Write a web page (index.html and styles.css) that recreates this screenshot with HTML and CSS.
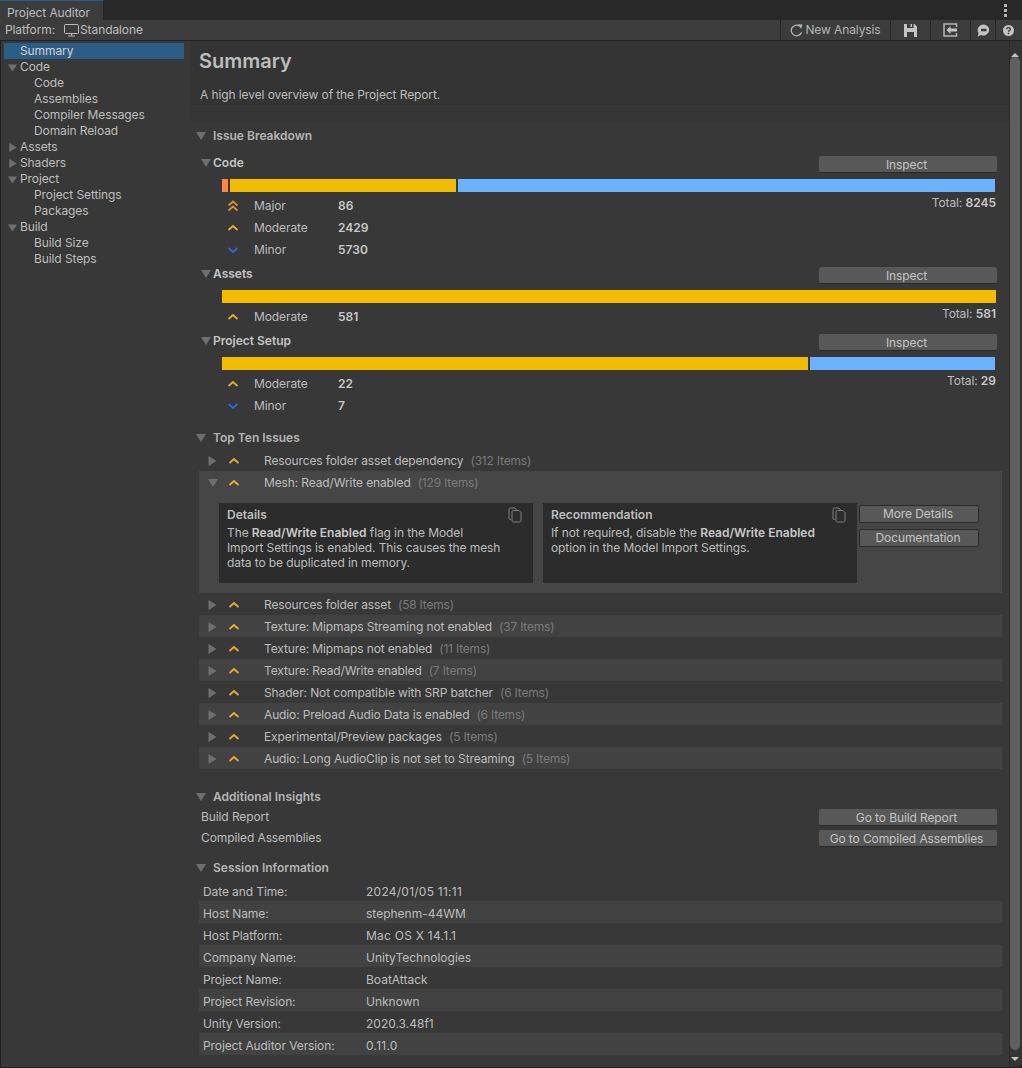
FILE: index.html
```html
<!DOCTYPE html>
<html lang="en">
<head>
  <meta charset="UTF-8">
  <meta name="viewport" content="width=device-width, initial-scale=1.0">
  <title>Project Auditor</title>
  <link rel="stylesheet" href="styles.css">
</head>
<body>
  <svg class="defs" width="0" height="0">
    <symbol id="tri-down" viewBox="0 0 10 8"><path d="M0 0H10L5 8Z"/></symbol>
    <symbol id="tri-right" viewBox="0 0 8 10"><path d="M0 0V10L8 5Z"/></symbol>
    <symbol id="sev-major" viewBox="0 0 12 12"><path d="M1.500 5.500 6 1.500l4.500 4M1.500 10.500 6 6.500l4.500 4" fill="none" stroke="#dc8f33" stroke-width="1.700"/></symbol>
    <symbol id="sev-moderate" viewBox="0 0 12 12"><path d="M1.500 8 6 4l4.500 4" fill="none" stroke="#e3b12f" stroke-width="1.700"/></symbol>
    <symbol id="sev-minor" viewBox="0 0 12 12"><path d="M1.500 4 6 8l4.500-4" fill="none" stroke="#3d5fe3" stroke-width="1.700"/></symbol>
    <symbol id="copy" viewBox="0 0 14 16"><path d="M3 12.500H2.500A1.500 1.500 0 0 1 1 11V2.500A1.500 1.500 0 0 1 2.500 1H7l1.500 2M5.500 3.500H11L13 5.500V13.500A1.500 1.500 0 0 1 11.500 15H5.500A1.500 1.500 0 0 1 4 13.500V5A1.500 1.500 0 0 1 5.500 3.500Z" fill="none" stroke="#7f7f7f" stroke-width="1"/></symbol>
  </svg>

  <!-- Window tab -->
  <div class="tabbar">
    <div class="tab">Project Auditor</div>
    <div class="dots"><i></i><i></i><i></i></div>
  </div>

  <!-- Toolbar -->
  <div class="toolbar">
    <span class="platform-label">Platform:</span>
    <svg class="monitor" width="15" height="13" viewBox="0 0 15 13"><path d="M1.500.500h12a1 1 0 0 1 1 1v7a1 1 0 0 1-1 1h-12a1 1 0 0 1-1-1v-7a1 1 0 0 1 1-1ZM7.500 9.500v2M4 12h7" fill="none" stroke="#bdbdbd"/></svg>
    <span>Standalone</span>
    <div class="tools">
      <div class="tool tool-text">
        <svg width="13" height="13" viewBox="0 0 13 13"><path d="M11.500 8.500A5.300 5.300 0 1 1 9.800 2.300" fill="none" stroke="#b4b4b4" stroke-width="1.300"/><path d="M8 0.200 12.500 0.600 11.200 4.800Z" fill="#b4b4b4"/></svg>
        <span>New Analysis</span>
      </div>
      <div class="tool tool-save">
        <svg width="13" height="13" viewBox="0 0 13 13"><path fill-rule="evenodd" d="M0 0H10.500L13 2.500V13H0ZM3 0V4H9.500V0H8V3H6.500V0ZM3 8V13H10V8Z" fill="#c4c4c4"/></svg>
      </div>
      <div class="tool tool-load">
        <svg width="15" height="14" viewBox="0 0 15 14"><path d="M13.500 4V1H1V13H13.500V10" fill="none" stroke="#b4b4b4" stroke-width="1.500"/><path d="M3.500 7 7.500 3V5.500H14V8.500H7.500V11Z" fill="#c4c4c4"/></svg>
      </div>
      <div class="tool tool-chat">
        <svg width="13" height="13" viewBox="0 0 13 13"><path fill-rule="evenodd" d="M6.800 0.500A5.800 5.500 0 1 1 4 11L.800 12.500 1.600 9A5.800 5.500 0 0 1 6.800.500ZM4 4.800V7.200H9.500V4.800Z" fill="#c4c4c4"/></svg>
      </div>
      <div class="tool tool-help">
        <svg width="11" height="11" viewBox="0 0 11 11"><circle cx="5.500" cy="5.500" r="5.500" fill="#c4c4c4"/><path d="M3.700 4.200a1.800 1.600 0 1 1 2.700 1.400c-.6.400-.9.600-.9 1.200" fill="none" stroke="#383838" stroke-width="1.300"/><rect x="4.800" y="7.700" width="1.400" height="1.400" fill="#383838"/></svg>
      </div>
    </div>
  </div>

  <div class="main">
    <!-- Left tree -->
    <nav class="tree">
      <div class="node selected">Summary</div>
      <div class="node"><svg class="arrow"><use href="#tri-down"/></svg>Code</div>
      <div class="node child">Code</div>
      <div class="node child">Assemblies</div>
      <div class="node child">Compiler Messages</div>
      <div class="node child">Domain Reload</div>
      <div class="node"><svg class="arrow arrow-right"><use href="#tri-right"/></svg>Assets</div>
      <div class="node"><svg class="arrow arrow-right"><use href="#tri-right"/></svg>Shaders</div>
      <div class="node"><svg class="arrow"><use href="#tri-down"/></svg>Project</div>
      <div class="node child">Project Settings</div>
      <div class="node child">Packages</div>
      <div class="node"><svg class="arrow"><use href="#tri-down"/></svg>Build</div>
      <div class="node child">Build Size</div>
      <div class="node child">Build Steps</div>
    </nav>

    <main class="content">
      <header class="page-header">
        <h1>Summary</h1>
        <p>A high level overview of the Project Report.</p>
      </header>
      <div class="header-band"></div>

      <h2 class="section-title"><svg class="fold"><use href="#tri-down"/></svg>Issue Breakdown</h2>

      <div class="sub-head sub-head-first">
        <svg class="fold"><use href="#tri-down"/></svg><h3>Code</h3>
        <button class="btn btn-wide">Inspect</button>
      </div>
      <div class="bar">
        <div class="seg seg-major" style="width: 6px"></div>
        <div class="seg seg-moderate" style="width: 226px"></div>
        <div class="seg seg-minor" style="width: 537px"></div>
      </div>
      <div class="stats">
        <div class="stat-list">
          <div class="stat"><svg class="sev"><use href="#sev-major"/></svg><span class="stat-name">Major</span><b>86</b></div>
          <div class="stat"><svg class="sev"><use href="#sev-moderate"/></svg><span class="stat-name">Moderate</span><b>2429</b></div>
          <div class="stat"><svg class="sev"><use href="#sev-minor"/></svg><span class="stat-name">Minor</span><b>5730</b></div>
        </div>
        <div class="total">Total: <b>8245</b></div>
      </div>

      <div class="sub-head">
        <svg class="fold"><use href="#tri-down"/></svg><h3>Assets</h3>
        <button class="btn btn-wide">Inspect</button>
      </div>
      <div class="bar">
        <div class="seg seg-moderate" style="width: 774px"></div>
      </div>
      <div class="stats">
        <div class="stat-list">
          <div class="stat"><svg class="sev"><use href="#sev-moderate"/></svg><span class="stat-name">Moderate</span><b>581</b></div>
        </div>
        <div class="total">Total: <b>581</b></div>
      </div>

      <div class="sub-head">
        <svg class="fold"><use href="#tri-down"/></svg><h3>Project Setup</h3>
        <button class="btn btn-wide">Inspect</button>
      </div>
      <div class="bar">
        <div class="seg seg-moderate" style="width: 586px"></div>
        <div class="seg seg-minor" style="width: 185px"></div>
      </div>
      <div class="stats">
        <div class="stat-list">
          <div class="stat"><svg class="sev"><use href="#sev-moderate"/></svg><span class="stat-name">Moderate</span><b>22</b></div>
          <div class="stat"><svg class="sev"><use href="#sev-minor"/></svg><span class="stat-name">Minor</span><b>7</b></div>
        </div>
        <div class="total">Total: <b>29</b></div>
      </div>

      <h2 class="section-title section-top"><svg class="fold"><use href="#tri-down"/></svg>Top Ten Issues</h2>

      <div class="issues">
        <div class="issue"><svg class="issue-arrow"><use href="#tri-right"/></svg><svg class="sev"><use href="#sev-moderate"/></svg><span class="issue-name">Resources folder asset dependency</span><span class="count">(312 Items)</span></div>

        <div class="issue-open">
          <div class="issue"><svg class="issue-arrow issue-arrow-down"><use href="#tri-down"/></svg><svg class="sev"><use href="#sev-moderate"/></svg><span class="issue-name">Mesh: Read/Write enabled</span><span class="count">(129 Items)</span></div>
          <div class="issue-body">
            <div class="card">
              <h4>Details</h4>
              <p>The <b>Read/Write Enabled</b> flag in the Model Import Settings is enabled. This causes the mesh data to be duplicated in memory.</p>
              <svg class="copy"><use href="#copy"/></svg>
            </div>
            <div class="card">
              <h4>Recommendation</h4>
              <p>If not required, disable the <b>Read/Write Enabled</b> option in the Model Import Settings.</p>
              <svg class="copy"><use href="#copy"/></svg>
            </div>
            <div class="card-actions">
              <button class="btn btn-outline">More Details</button>
              <button class="btn btn-outline">Documentation</button>
            </div>
          </div>
        </div>

        <div class="issue"><svg class="issue-arrow"><use href="#tri-right"/></svg><svg class="sev"><use href="#sev-moderate"/></svg><span class="issue-name">Resources folder asset</span><span class="count">(58 Items)</span></div>
        <div class="issue alt"><svg class="issue-arrow"><use href="#tri-right"/></svg><svg class="sev"><use href="#sev-moderate"/></svg><span class="issue-name">Texture: Mipmaps Streaming not enabled</span><span class="count">(37 Items)</span></div>
        <div class="issue"><svg class="issue-arrow"><use href="#tri-right"/></svg><svg class="sev"><use href="#sev-moderate"/></svg><span class="issue-name">Texture: Mipmaps not enabled</span><span class="count">(11 Items)</span></div>
        <div class="issue alt"><svg class="issue-arrow"><use href="#tri-right"/></svg><svg class="sev"><use href="#sev-moderate"/></svg><span class="issue-name">Texture: Read/Write enabled</span><span class="count">(7 Items)</span></div>
        <div class="issue"><svg class="issue-arrow"><use href="#tri-right"/></svg><svg class="sev"><use href="#sev-moderate"/></svg><span class="issue-name">Shader: Not compatible with SRP batcher</span><span class="count">(6 Items)</span></div>
        <div class="issue alt"><svg class="issue-arrow"><use href="#tri-right"/></svg><svg class="sev"><use href="#sev-moderate"/></svg><span class="issue-name">Audio: Preload Audio Data is enabled</span><span class="count">(6 Items)</span></div>
        <div class="issue"><svg class="issue-arrow"><use href="#tri-right"/></svg><svg class="sev"><use href="#sev-moderate"/></svg><span class="issue-name">Experimental/Preview packages</span><span class="count">(5 Items)</span></div>
        <div class="issue alt"><svg class="issue-arrow"><use href="#tri-right"/></svg><svg class="sev"><use href="#sev-moderate"/></svg><span class="issue-name">Audio: Long AudioClip is not set to Streaming</span><span class="count">(5 Items)</span></div>
      </div>

      <h2 class="section-title section-insights"><svg class="fold"><use href="#tri-down"/></svg>Additional Insights</h2>
      <div class="insight"><span>Build Report</span><button class="btn btn-wide">Go to Build Report</button></div>
      <div class="insight"><span>Compiled Assemblies</span><button class="btn btn-wide">Go to Compiled Assemblies</button></div>

      <h2 class="section-title section-session"><svg class="fold"><use href="#tri-down"/></svg>Session Information</h2>
      <div class="session">
        <div class="info"><span class="info-key">Date and Time:</span><span class="info-value info-wide">2024/01/05 11:11</span></div>
        <div class="info alt"><span class="info-key">Host Name:</span><span class="info-value">stephenm-44WM</span></div>
        <div class="info"><span class="info-key">Host Platform:</span><span class="info-value info-wide">Mac OS X 14.1.1</span></div>
        <div class="info alt"><span class="info-key">Company Name:</span><span class="info-value">UnityTechnologies</span></div>
        <div class="info"><span class="info-key">Project Name:</span><span class="info-value">BoatAttack</span></div>
        <div class="info alt"><span class="info-key">Project Revision:</span><span class="info-value">Unknown</span></div>
        <div class="info"><span class="info-key">Unity Version:</span><span class="info-value">2020.3.48f1</span></div>
        <div class="info alt"><span class="info-key">Project Auditor Version:</span><span class="info-value info-wide">0.11.0</span></div>
      </div>
    </main>

    <!-- Vertical scrollbar -->
    <div class="scrollbar">
      <div class="scroll-arrow scroll-up"></div>
      <div class="scroll-thumb"></div>
      <div class="scroll-arrow scroll-down"></div>
    </div>
  </div>
</body>
</html>
```

FILE: styles.css
```css
* {
  box-sizing: border-box;
}
html {
  height: 100%;
  background-color: #1f1f1f;
}
body {
  margin: 0;
  width: 1022px;
  height: 1068px;
  overflow: hidden;
  background-color: #383838;
  color: #bdbdbd;
  font-family: Inter, "Liberation Sans", sans-serif;
  font-size: 12px;
  line-height: 16px;
  letter-spacing: -0.1px;
  display: flex;
  flex-direction: column;
  border-bottom: 1px solid #1f1f1f;
  border-bottom-right-radius: 5px;
}
.defs {
  position: absolute;
}
h1, h2, h3, h4, p {
  margin: 0;
}
b {
  font-weight: 600;
  color: #c8c8c8;
  letter-spacing: 0;
}
button {
  font: inherit;
  letter-spacing: inherit;
  padding: 0;
}

/* tab bar */
.tabbar {
  height: 20px;
  flex: none;
  background-color: #282828;
  display: flex;
  justify-content: space-between;
}
.tab {
  width: 104px;
  height: 20px;
  padding: 4px 0 0 7px;
  background-color: #3c3c3c;
  border-top: 1px solid #2c5d87;
  border-right: 1px solid #232323;
  line-height: 15px;
}
.dots {
  width: 4px;
  margin: 4px 14px 0 0;
  display: flex;
  flex-direction: column;
  gap: 2px;
}
.dots i {
  width: 3px;
  height: 3px;
  background-color: #b4b4b4;
}

/* toolbar */
.toolbar {
  height: 21px;
  flex: none;
  background-color: #3c3c3c;
  border-bottom: 1px solid #232323;
  padding-left: 5px;
  display: flex;
  align-items: center;
}
.platform-label {
  margin-right: 9px;
}
.monitor {
  margin-right: 1px;
}
.tools {
  margin-left: auto;
  margin-right: 2px;
  display: flex;
  height: 20px;
}
.tool {
  border-left: 1px solid #262626;
  display: flex;
  align-items: center;
  justify-content: center;
  height: 20px;
}
.tool-text {
  width: 110px;
  gap: 2px;
  color: #b4b4b4;
}
.tool-save { width: 40px; }
.tool-load { width: 40px; }
.tool-chat { width: 25px; }
.tool-help { width: 25px; }

/* main area */
.main {
  flex: 1;
  display: flex;
  min-height: 0;
}

/* tree */
.tree {
  width: 191px;
  flex: none;
  padding: 2px 7px 0 3px;
  border-left: 1px solid #1f1f1f;
}
.node {
  height: 16px;
  padding-left: 16px;
  position: relative;
  white-space: nowrap;
}
.selected {
  background-color: #2c5d87;
  color: #d2d2d2;
}
.child {
  padding-left: 30px;
}
.arrow {
  position: absolute;
  left: 4px;
  top: 5px;
  width: 9px;
  height: 8px;
  fill: #6f6f6f;
}
.arrow-right {
  left: 5px;
  top: 4px;
  width: 8px;
  height: 9px;
}

/* content */
.content {
  width: 818px;
  flex: none;
  overflow: hidden;
}
.page-header {
  height: 66px;
  background-color: #343434;
  padding: 8px 8px 0;
  border-bottom: 1px solid #3a3a3a;
}
.page-header h1 {
  font-size: 20px;
  line-height: 24px;
  font-weight: 600;
  letter-spacing: 0;
  color: #bdbdbd;
}
.page-header p {
  margin: 14px 0 0 1px;
}
.header-band {
  height: 15px;
  background-color: #363636;
}
.section-title {
  height: 22px;
  font-size: 12px;
  font-weight: 600;
  letter-spacing: 0;
  line-height: 22px;
  color: #b4b4b4;
  padding-left: 22px;
  margin-top: 3px;
  position: relative;
}
.fold {
  position: absolute;
  left: 5px;
  top: 7px;
  width: 10px;
  height: 8px;
  fill: #6f6f6f;
}
.section-top {
  margin-top: 10px;
}
.section-insights {
  margin-top: 17px;
}
.section-session {
  margin-top: 7px;
}

/* breakdown */
.sub-head {
  height: 22px;
  margin-top: 2px;
  padding: 0 12px 0 22px;
  display: flex;
  align-items: center;
  justify-content: space-between;
  position: relative;
}
.sub-head-first {
  margin-top: 5px;
}
.sub-head .fold {
  left: 10px;
}
.sub-head .btn {
  align-self: flex-start;
  margin-top: 4px;
}
.sub-head h3 {
  font-size: 12px;
  font-weight: 600;
  letter-spacing: 0;
  color: #c4c4c4;
}
.btn {
  height: 17px;
  line-height: 16px;
  color: #c4c4c4;
  background-color: #585858;
  border: 0;
  border-bottom: 1px solid #2a2a2a;
  border-radius: 2px;
  text-align: center;
}
.btn-wide {
  width: 178px;
  flex: none;
  padding: 1px 3px 0 0;
}
.btn-outline {
  width: 120px;
  padding: 0 2px 1px 0;
  border: 1px solid #2a2a2a;
  line-height: 15px;
  height: 18px;
}
.bar {
  height: 13px;
  margin: 5px 12px 0 31px;
  display: flex;
  gap: 2px;
}
.seg {
  height: 13px;
  flex: none;
}
.seg-major { background-color: #ff8547; }
.seg-moderate { background-color: #f2bc00; }
.seg-minor { background-color: #6cb3ff; }
.stats {
  margin-top: 3px;
  padding: 0 13px 0 36px;
  display: flex;
  justify-content: space-between;
}
.stat {
  height: 22px;
  display: flex;
  align-items: center;
}
.sev {
  width: 12px;
  height: 12px;
  flex: none;
}
.stat-name {
  width: 84px;
  margin-left: 15px;
}

/* top ten issues */
.issues {
  margin: 0 7px 0 8px;
}
.issue {
  height: 22px;
  padding: 2px 0 0 9px;
  display: flex;
  align-items: center;
}
.alt {
  background-color: #424242;
}
.issue-arrow {
  width: 9px;
  height: 10px;
  fill: #6f6f6f;
  flex: none;
  margin-right: 11px;
}
.issue-arrow-down {
  width: 10px;
  height: 8px;
  margin-right: 10px;
}
.issue-name {
  margin-left: 24px;
  letter-spacing: -0.13px;
}
.count {
  margin-left: 7px;
  letter-spacing: -0.2px;
  color: #7b7b7b;
}
.issue-open {
  height: 122px;
  background-color: #464646;
}
.issue-open .issue {
  height: 24px;
  padding-top: 0;
}
.issue-body {
  margin: 8px 0 0 20px;
  display: flex;
  gap: 10px;
}
.card {
  width: 314px;
  height: 80px;
  padding: 4px 8px;
  background-color: #2c2c2c;
  position: relative;
  line-height: 15px;
}
.card p {
  max-width: 275px;
}
.card h4 {
  font-size: 12px;
  font-weight: 600;
  letter-spacing: 0;
  color: #bdbdbd;
  line-height: 16px;
  margin-bottom: 2px;
}
.copy {
  position: absolute;
  top: 4px;
  right: 11px;
  width: 14px;
  height: 16px;
}
.card-actions {
  margin-left: -8px;
  padding-top: 2px;
  display: flex;
  flex-direction: column;
  gap: 6px;
}

/* insights */
.insight {
  height: 21px;
  padding: 1px 12px 0 10px;
  display: flex;
  align-items: flex-start;
  justify-content: space-between;
}

/* session info */
.session {
  margin: 0 7px 0 8px;
}
.info {
  height: 22px;
  padding: 3px 0 0 4px;
  display: flex;
  align-items: center;
}
.info-key {
  width: 163px;
}
.info-value {
  letter-spacing: 0;
}
.info-wide {
  letter-spacing: 0.25px;
}

/* scrollbar */
.scrollbar {
  width: 13px;
  flex: none;
  background-color: #343434;
  border-left: 1px solid #2a2a2a;
  display: flex;
  flex-direction: column;
  align-items: center;
}
.scroll-thumb {
  flex: 1;
  width: 10px;
  margin-right: 2px;
  background-color: #5f5f5f;
  border-radius: 5px;
}
.scroll-arrow {
  flex: none;
  margin-right: 2px;
  width: 0;
  border-left: 4px solid transparent;
  border-right: 4px solid transparent;
}
.scroll-up {
  border-bottom: 4px solid #c4c4c4;
  border-top: 5px solid transparent;
  height: 16px;
}
.scroll-down {
  border-top: 4px solid #c4c4c4;
  border-bottom: 5px solid transparent;
  margin-top: 7px;
  height: 10px;
}
```
